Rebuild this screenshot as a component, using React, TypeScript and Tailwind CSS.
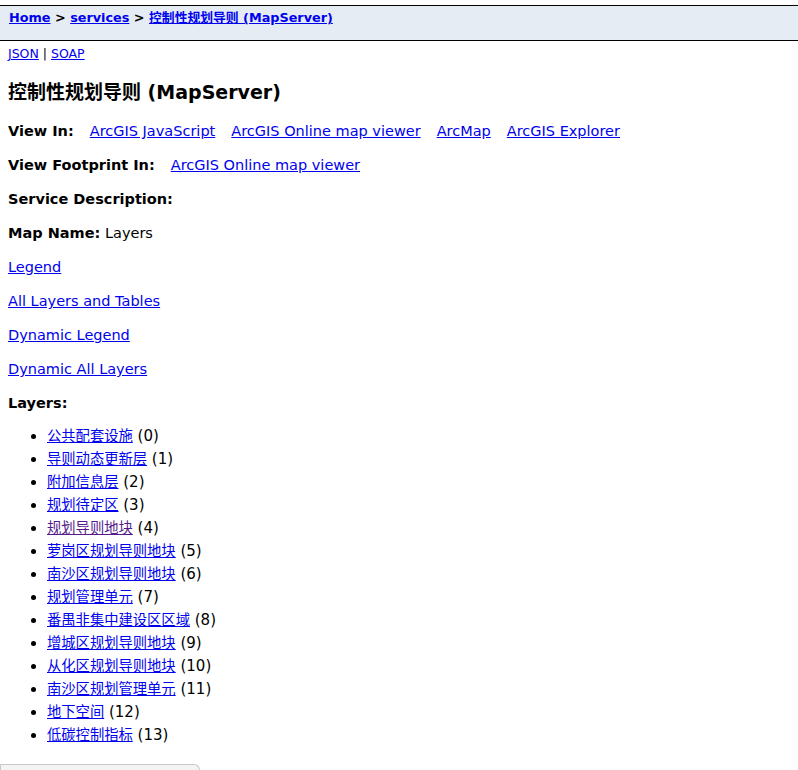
import React from 'react';

const font = { fontFamily: '"DejaVu Sans", Verdana, "Noto Sans CJK SC", sans-serif' };

const layers = [
  '公共配套设施',
  '导则动态更新层',
  '附加信息层',
  '规划待定区',
  '规划导则地块',
  '萝岗区规划导则地块',
  '南沙区规划导则地块',
  '规划管理单元',
  '番禺非集中建设区区域',
  '增城区规划导则地块',
  '从化区规划导则地块',
  '南沙区规划管理单元',
  '地下空间',
  '低碳控制指标',
];

const link = 'text-[#0000ee] underline';

const App: React.FC = () => {
  return (
    <div className="relative min-h-[770px] bg-white text-black" style={font}>
      <div className="pt-[5px]">
        <div className="h-[36px] border-t border-b border-black bg-[#e5ecf4] pl-[9px] pt-[4px] text-[12.8px] font-bold leading-[16px]">
          <a className={link} href="#">Home</a> &gt; <a className={link} href="#">services</a> &gt;{' '}
          <a className={link} href="#">控制性规划导则 (MapServer)</a>
        </div>
      </div>

      <div className="px-[8px]">
        <div className="mt-[5px] text-[12.5px] leading-[15px]">
          <a className={link} href="#">JSON</a> | <a className={link} href="#">SOAP</a>
        </div>

        <h2 className="mt-[20px] text-[19px] font-bold leading-[23px]">控制性规划导则 (MapServer)</h2>

        <div className="mt-[19px] text-[14.5px] leading-[17px]">
          <p className="mb-[17px]">
            <b>View In:</b>
            <a className={`${link} ml-[16px]`} href="#">ArcGIS JavaScript</a>
            <a className={`${link} ml-[16px]`} href="#">ArcGIS Online map viewer</a>
            <a className={`${link} ml-[16px]`} href="#">ArcMap</a>
            <a className={`${link} ml-[16px]`} href="#">ArcGIS Explorer</a>
          </p>
          <p className="mb-[17px]">
            <b>View Footprint In:</b>
            <a className={`${link} ml-[16px]`} href="#">ArcGIS Online map viewer</a>
          </p>
          <p className="mb-[17px]"><b>Service Description: </b></p>
          <p className="mb-[17px]"><b>Map Name:</b> Layers</p>
          <p className="mb-[17px]"><a className={link} href="#">Legend</a></p>
          <p className="mb-[17px]"><a className={link} href="#">All Layers and Tables</a></p>
          <p className="mb-[17px]"><a className={link} href="#">Dynamic Legend</a></p>
          <p className="mb-[17px]"><a className={link} href="#">Dynamic All Layers</a></p>
          <p><b>Layers: </b></p>

          <ul className="mt-[13px] list-disc pl-[39px] text-[15px] leading-[23px]">
            {layers.map((name, i) => (
              <li key={i}>
                <a className={`${i === 4 ? 'text-[#551a8b] underline' : link} text-[14.3px]`} href="#">{name}</a> ({i})
              </li>
            ))}
          </ul>
        </div>
      </div>

      <div className="absolute bottom-0 left-0 h-[6px] w-[200px] rounded-tr-md border border-b-0 border-[#c8c8c8] bg-[#f4f4f4]" />
    </div>
  );
};

export default App;
